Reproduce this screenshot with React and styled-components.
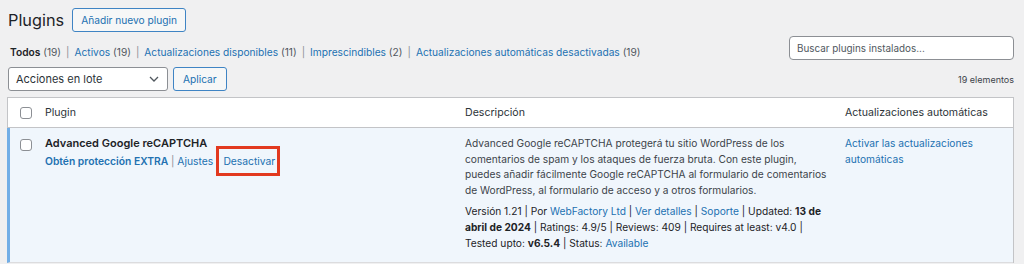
import React from "react";
import styled, { createGlobalStyle } from "styled-components";

const GlobalStyle = createGlobalStyle`
    body {
        margin: 0;
        background: #f0f0f1;
        font-family: Inter, "Noto Sans", sans-serif;
        font-size: 10.2px;
        color: #3c434a;
    }
`;

const Page = styled.div`
    padding: 8px 10px 0 7px;
`;

const HeaderRow = styled.div`
    display: flex;
    align-items: center;
    gap: 8px;
    padding-left: 1px;
`;

const Title = styled.h1`
    margin: 0;
    font-size: 16.3px;
    font-weight: 400;
    line-height: 24px;
    color: #1d2327;
`;

const Button = styled.button`
    height: 24px;
    padding: 0 ${(p) => (p.$wide ? 8 : 9)}px;
    border: 1px solid #3f84c4;
    border-radius: 3px;
    background: #f6f7f7;
    color: #2271b1;
    font: inherit;
    font-size: 10.2px;
    cursor: pointer;
`;

const FilterRow = styled.div`
    display: flex;
    justify-content: space-between;
    align-items: center;
    margin-top: 4px;
    height: 24px;
`;

const Views = styled.ul`
    display: flex;
    margin: 8px 0 0;
    padding: 0 0 0 3px;
    list-style: none;
    font-size: 10.2px;
    color: #50575e;
`;

const View = styled.li`
    white-space: pre;
    a {
        color: ${(p) => (p.$current ? "#1d2327" : "#2271b1")};
        font-weight: ${(p) => (p.$current ? 600 : 400)};
        text-decoration: none;
    }
`;

const Sep = styled.span`
    color: #8c8f94;
    padding: 0 5px;
`;

const Search = styled.input`
    width: 225px;
    height: 24px;
    box-sizing: border-box;
    border: 1px solid #8c8f94;
    border-radius: 4px;
    padding: 0 7px;
    font: inherit;
    font-size: 9.9px;
    color: #2c3338;
    background: #fff;
    &::placeholder {
        color: #50575e;
    }
`;

const NavRow = styled.div`
    display: flex;
    align-items: center;
    justify-content: space-between;
    margin-top: 7px;
    padding-left: 1px;
`;

const BulkGroup = styled.div`
    display: flex;
    gap: 5px;
`;

const Select = styled.div`
    width: 160px;
    height: 24px;
    box-sizing: border-box;
    border: 1px solid #8c8f94;
    border-radius: 3px;
    background: #fff;
    display: flex;
    align-items: center;
    justify-content: space-between;
    padding: 0 8px 0 7px;
    color: #2c3338;
    font-size: 11px;
`;

const Count = styled.span`
    font-size: 9px;
    color: #3c434a;
`;

const Table = styled.div`
    margin-top: 6px;
    border: 1px solid #c3c4c7;
    border-bottom: none;
    background: #fff;
    display: grid;
    grid-template-columns: 27px 420px 382px 1fr;
`;

const HeadCell = styled.div`
    height: 29px;
    border-bottom: 1px solid #c3c4c7;
    display: flex;
    align-items: center;
    padding-left: ${(p) => p.$pad ?? 10}px;
    color: #2c3338;
    font-size: 10.6px;
`;

const Cell = styled.div`
    background: #f0f6fc;
    border-bottom: 1px solid #dcdcde;
    padding: 8px ${(p) => p.$padRight ?? 10}px 10px ${(p) => p.$pad ?? 10}px;
    line-height: 15.6px;
    min-height: 116px;
    ${(p) => p.$stripe && "border-left: 3px solid #72aee6; margin-left: -1px; padding-left: 10px;"}
`;

const Checkbox = styled.span`
    display: block;
    box-sizing: border-box;
    width: 12px;
    height: 12px;
    border: 1px solid #8c8f94;
    border-radius: 3px;
    background: #fff;
    margin-top: ${(p) => p.$top ?? 0}px;
`;

const PluginName = styled.strong`
    display: block;
    color: #1d2327;
    font-size: 11px;
    font-weight: 600;
`;

const RowActions = styled.div`
    margin-top: 2px;
    color: #8c8f94;
    font-size: 10.3px;
    a {
        color: #2271b1;
        text-decoration: none;
    }
`;

const BoldLink = styled.a`
    font-weight: 600;
`;

const Highlight = styled.a`
    position: relative;
    display: inline-block;
    margin-left: 1px;
    &::after {
        content: "";
        position: absolute;
        left: -7px;
        right: -5px;
        top: -8px;
        bottom: -7px;
        border: 3px solid #e2391f;
    }
`;

const Desc = styled.p`
    margin: 0;
    color: #3c434a;
    font-size: 10.2px;
`;

const Meta = styled.div`
    margin-top: 6px;
    color: #1d2327;
    font-size: 10.2px;
    a {
        color: #2271b1;
        text-decoration: none;
    }
`;

const AutoLink = styled.a`
    color: #2271b1;
    text-decoration: none;
    font-size: 10.2px;
`;

function Chevron() {
    return (
        <svg width="10" height="6" viewBox="0 0 10 6">
            <path d="M1 1l4 4 4-4" fill="none" stroke="#50575e" strokeWidth="1.3" />
        </svg>
    );
}

const views = [
    { label: "Todos", count: 19, current: true },
    { label: "Activos", count: 19 },
    { label: "Actualizaciones disponibles", count: 11 },
    { label: "Imprescindibles", count: 2 },
    { label: "Actualizaciones automáticas desactivadas", count: 19 },
];

export default function App() {
    return (
        <Page>
            <GlobalStyle />
            <HeaderRow>
                <Title>Plugins</Title>
                <Button $wide>Añadir nuevo plugin</Button>
            </HeaderRow>
            <FilterRow>
                <Views>
                    {views.map((v, i) => (
                        <View key={v.label} $current={v.current}>
                            <a href="#">{v.label}</a> ({v.count})
                            {i < views.length - 1 && <Sep>|</Sep>}
                        </View>
                    ))}
                </Views>
                <Search placeholder="Buscar plugins instalados..." />
            </FilterRow>
            <NavRow>
                <BulkGroup>
                    <Select>
                        Acciones en lote
                        <Chevron />
                    </Select>
                    <Button>Aplicar</Button>
                </BulkGroup>
                <Count>19 elementos</Count>
            </NavRow>
            <Table>
                <HeadCell $pad={12}>
                    <Checkbox />
                </HeadCell>
                <HeadCell>Plugin</HeadCell>
                <HeadCell>Descripción</HeadCell>
                <HeadCell $pad={8}>Actualizaciones automáticas</HeadCell>

                <Cell $stripe>
                    <Checkbox $top={3} />
                </Cell>
                <Cell>
                    <PluginName>Advanced Google reCAPTCHA</PluginName>
                    <RowActions>
                        <BoldLink href="#">Obtén protección EXTRA</BoldLink> | <a href="#">Ajustes</a> |{" "}
                        <Highlight href="#">Desactivar</Highlight>
                    </RowActions>
                </Cell>
                <Cell $padRight={6}>
                    <Desc>
                        Advanced Google reCAPTCHA protegerá tu sitio WordPress de los comentarios de spam y los
                        ataques de fuerza bruta. Con este plugin, puedes añadir fácilmente Google reCAPTCHA al
                        formulario de comentarios de WordPress, al formulario de acceso y a otros formularios.
                    </Desc>
                    <Meta>
                        Versión 1.21 | Por <a href="#">WebFactory Ltd</a> | <a href="#">Ver detalles</a> |{" "}
                        <a href="#">Soporte</a> | Updated: <b>13 de abril de 2024</b> | Ratings: 4.9/5 | Reviews:
                        409 | Requires at least: v4.0 | Tested upto: <b>v6.5.4</b> | Status:{" "}
                        <a href="#">Available</a>
                    </Meta>
                </Cell>
                <Cell $pad={8}>
                    <AutoLink href="#">Activar las actualizaciones automáticas</AutoLink>
                </Cell>
            </Table>
        </Page>
    );
}
